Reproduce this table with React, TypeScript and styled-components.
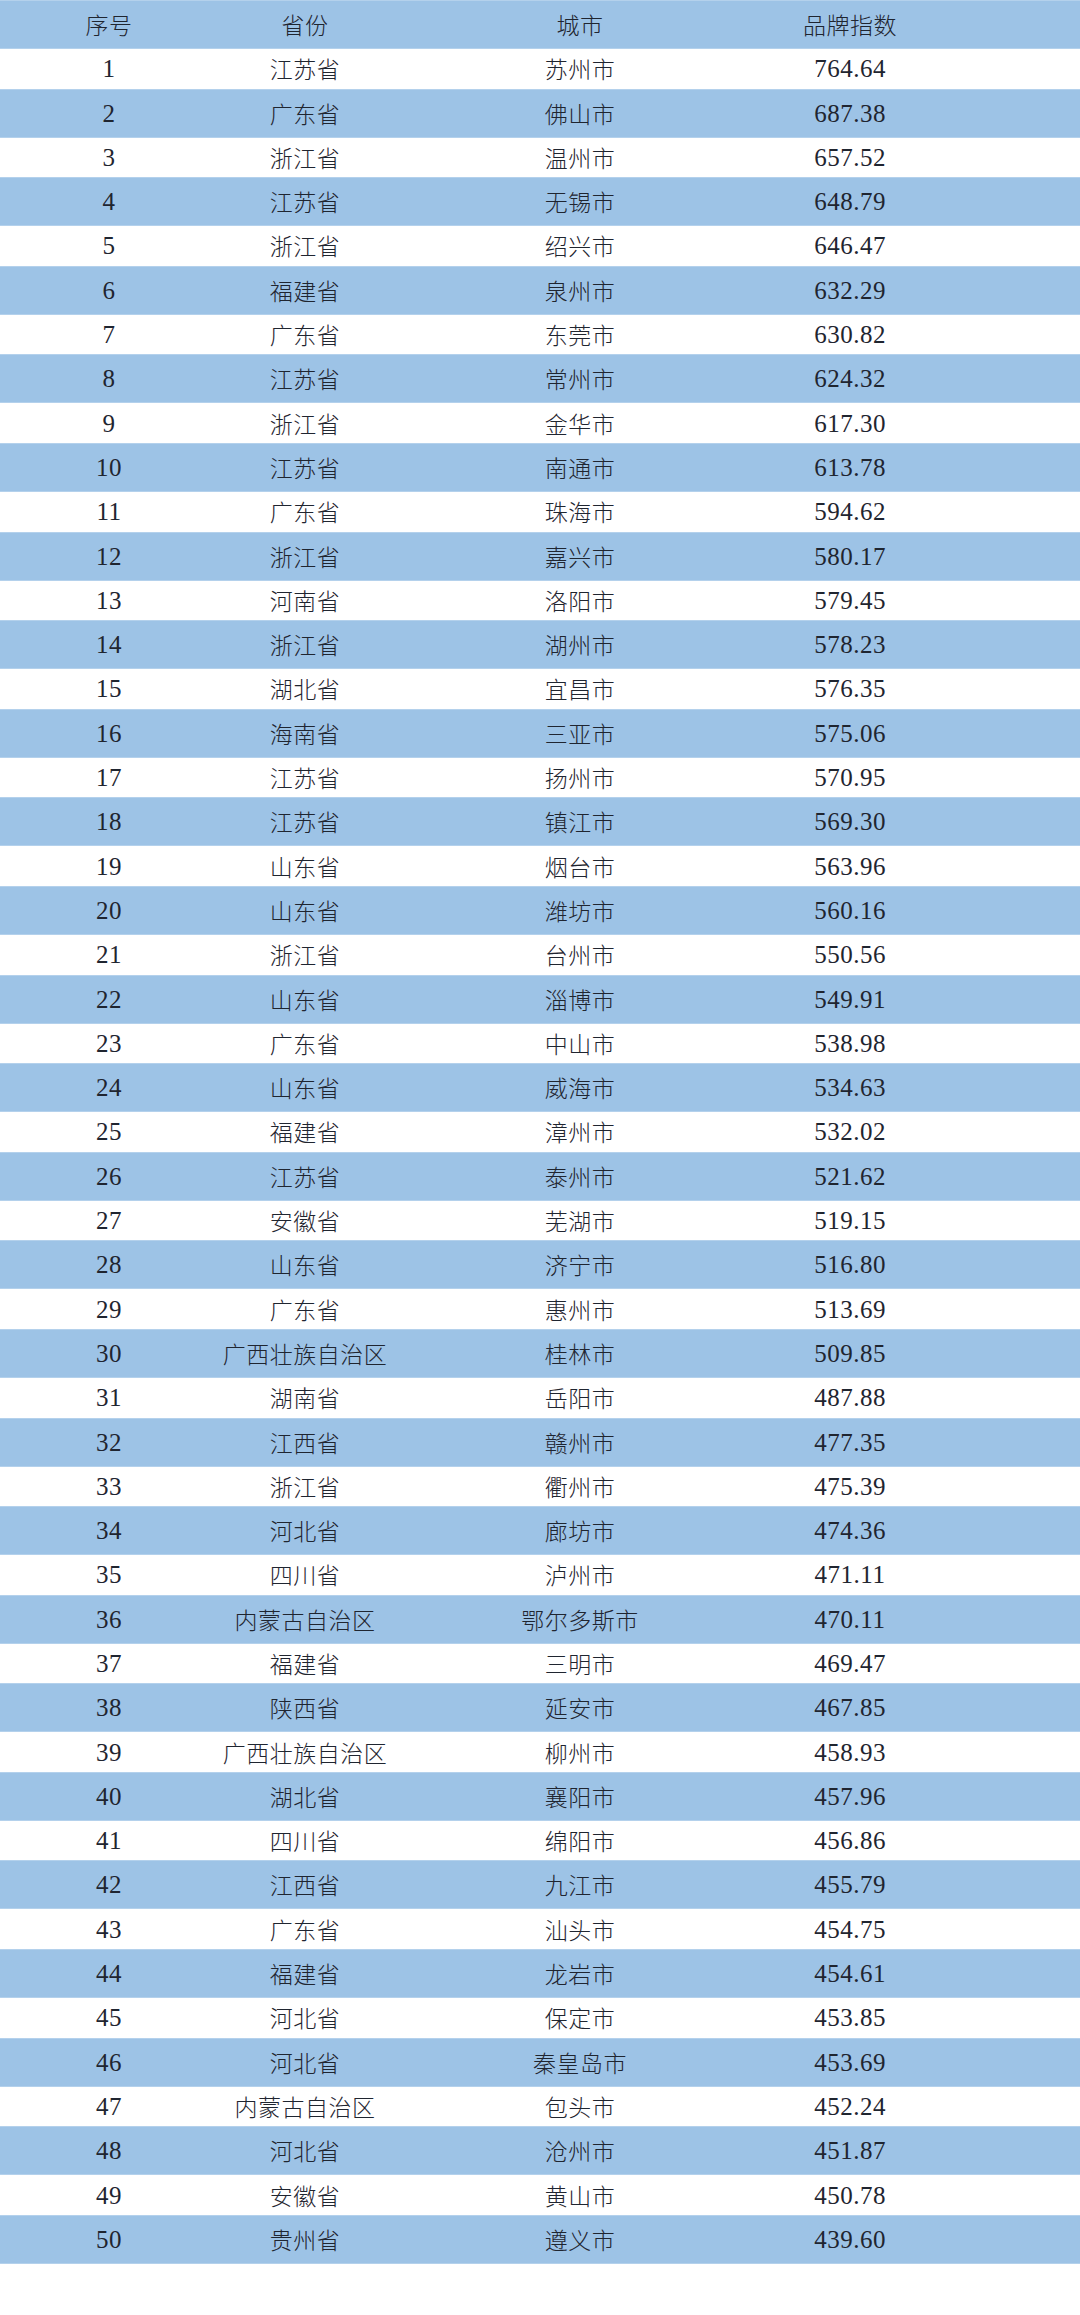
import styled, { createGlobalStyle } from "styled-components";

const GlobalStyle = createGlobalStyle`
  html, body {
    margin: 0;
    padding: 0;
    background: #ffffff;
  }
  body {
    font-family: "Liberation Serif", "Noto Sans CJK SC", serif;
  }
`;

const Table = styled.div`
  width: 1080px;
  display: flex;
  flex-direction: column;
  background: #ffffff;
  padding-bottom: 51px;
`;

const Row = styled.div<{ $blue: boolean; $head?: boolean }>`
  display: grid;
  grid-template-columns: 218px 174px 376px 164px 1fr;
  align-items: center;
  height: ${(p) => (p.$head ? "49px" : p.$blue ? "49px" : "39.6px")};
  background: ${(p) => (p.$blue ? "#9dc3e6" : "#ffffff")};
  box-shadow: ${(p) => (p.$blue ? "inset 0 1px 0 #b4d1ec, inset 0 -1px 0 #b4d1ec" : "none")};
  color: #1f2530;
`;

const Cell = styled.div<{ $num?: boolean }>`
  text-align: center;
  white-space: nowrap;
  font-family: ${(p) =>
    p.$num
      ? `"Liberation Serif", "Noto Sans CJK SC", serif`
      : `"Noto Sans CJK SC", sans-serif`};
  font-size: ${(p) => (p.$num ? "25px" : "23px")};
  font-weight: ${(p) => (p.$num ? 400 : 300)};
  letter-spacing: ${(p) => (p.$num ? "0.5px" : "0.5px")};
  line-height: 1;
`;

const data: [string, string, string][] = [
  ["江苏省", "苏州市", "764.64"],
  ["广东省", "佛山市", "687.38"],
  ["浙江省", "温州市", "657.52"],
  ["江苏省", "无锡市", "648.79"],
  ["浙江省", "绍兴市", "646.47"],
  ["福建省", "泉州市", "632.29"],
  ["广东省", "东莞市", "630.82"],
  ["江苏省", "常州市", "624.32"],
  ["浙江省", "金华市", "617.30"],
  ["江苏省", "南通市", "613.78"],
  ["广东省", "珠海市", "594.62"],
  ["浙江省", "嘉兴市", "580.17"],
  ["河南省", "洛阳市", "579.45"],
  ["浙江省", "湖州市", "578.23"],
  ["湖北省", "宜昌市", "576.35"],
  ["海南省", "三亚市", "575.06"],
  ["江苏省", "扬州市", "570.95"],
  ["江苏省", "镇江市", "569.30"],
  ["山东省", "烟台市", "563.96"],
  ["山东省", "潍坊市", "560.16"],
  ["浙江省", "台州市", "550.56"],
  ["山东省", "淄博市", "549.91"],
  ["广东省", "中山市", "538.98"],
  ["山东省", "威海市", "534.63"],
  ["福建省", "漳州市", "532.02"],
  ["江苏省", "泰州市", "521.62"],
  ["安徽省", "芜湖市", "519.15"],
  ["山东省", "济宁市", "516.80"],
  ["广东省", "惠州市", "513.69"],
  ["广西壮族自治区", "桂林市", "509.85"],
  ["湖南省", "岳阳市", "487.88"],
  ["江西省", "赣州市", "477.35"],
  ["浙江省", "衢州市", "475.39"],
  ["河北省", "廊坊市", "474.36"],
  ["四川省", "泸州市", "471.11"],
  ["内蒙古自治区", "鄂尔多斯市", "470.11"],
  ["福建省", "三明市", "469.47"],
  ["陕西省", "延安市", "467.85"],
  ["广西壮族自治区", "柳州市", "458.93"],
  ["湖北省", "襄阳市", "457.96"],
  ["四川省", "绵阳市", "456.86"],
  ["江西省", "九江市", "455.79"],
  ["广东省", "汕头市", "454.75"],
  ["福建省", "龙岩市", "454.61"],
  ["河北省", "保定市", "453.85"],
  ["河北省", "秦皇岛市", "453.69"],
  ["内蒙古自治区", "包头市", "452.24"],
  ["河北省", "沧州市", "451.87"],
  ["安徽省", "黄山市", "450.78"],
  ["贵州省", "遵义市", "439.60"],
];

function App() {
  return (
    <>
      <GlobalStyle />
      <Table>
        <Row $blue $head>
          <Cell>序号</Cell>
          <Cell>省份</Cell>
          <Cell>城市</Cell>
          <Cell>品牌指数</Cell>
          <div />
        </Row>
        {data.map(([province, city, score], i) => (
          <Row key={i} $blue={i % 2 === 1}>
            <Cell $num>{i + 1}</Cell>
            <Cell>{province}</Cell>
            <Cell>{city}</Cell>
            <Cell $num>{score}</Cell>
            <div />
          </Row>
        ))}
      </Table>
    </>
  );
}

export default App;
